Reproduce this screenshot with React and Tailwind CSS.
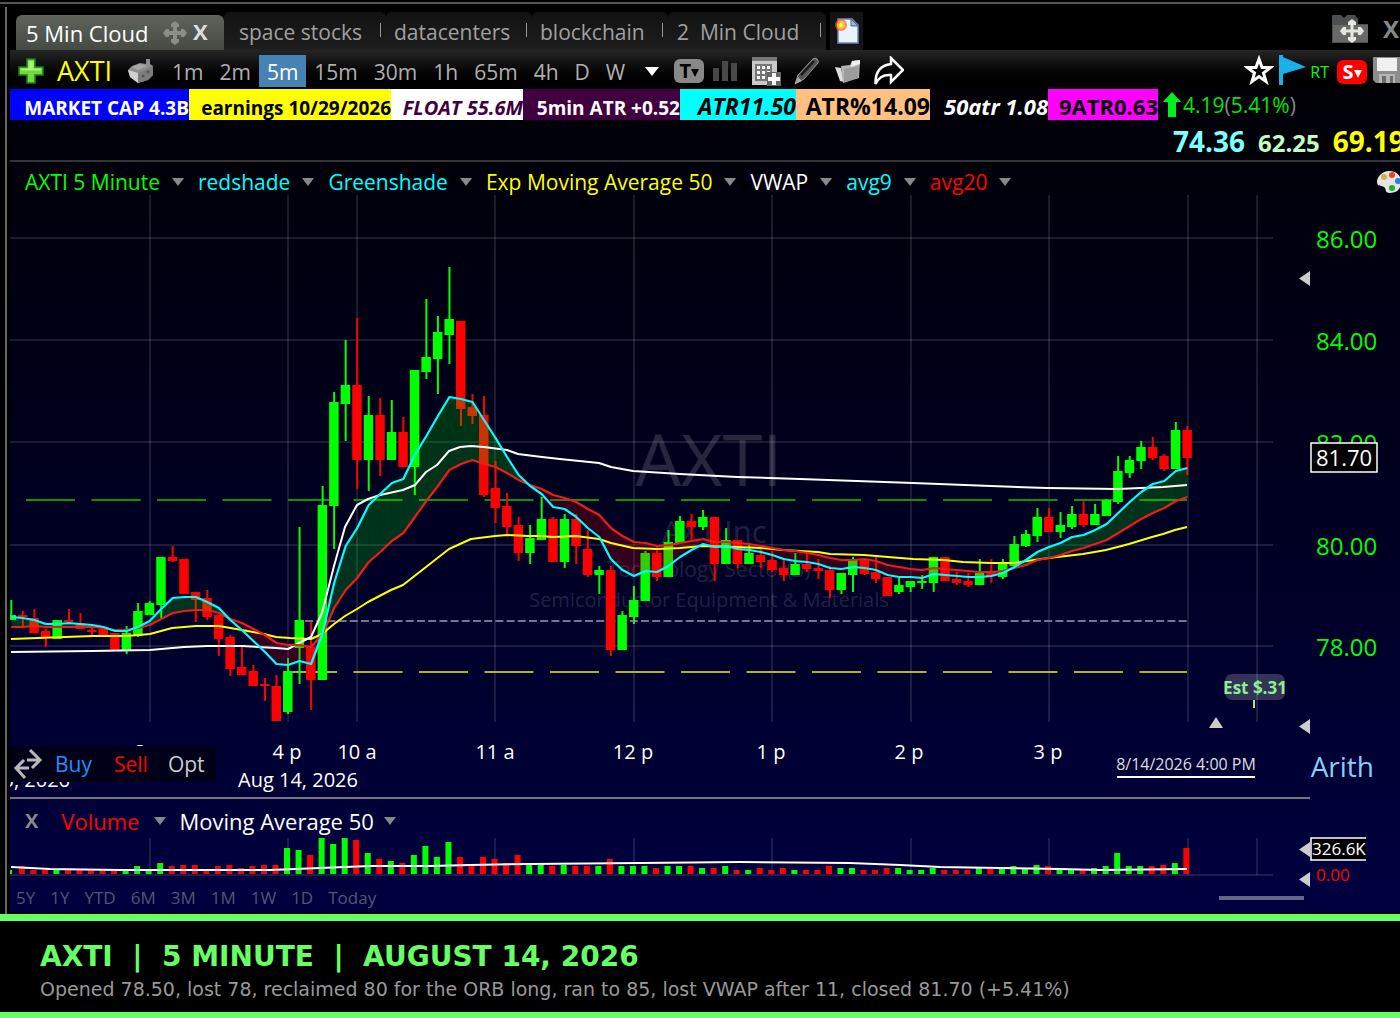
import { useState } from 'react';

// [color, high, bodyTop, bodyBottom, low, volume] for every 5 minute bar
const bars = [
  ['g', 600, 615, 620, 620, 4], ['r', 611, 615, 617, 626, 8], ['r', 609, 618, 633, 633, 4], ['r', 629, 631, 637, 647, 4],
  ['g', 620, 620, 639, 639, 4], ['r', 609, 620, 622, 624, 5], ['r', 613, 623, 629, 629, 4], ['r', 628, 630, 632, 636, 4],
  ['r', 629, 629, 636, 636, 4], ['r', 633, 633, 650, 650, 4], ['g', 626, 633, 651, 654, 4], ['g', 603, 611, 636, 637, 8],
  ['g', 601, 603, 615, 615, 4], ['g', 557, 557, 605, 618, 11], ['r', 546, 557, 561, 562, 8], ['r', 559, 559, 594, 594, 9],
  ['r', 592, 592, 600, 622, 9], ['r', 590, 598, 617, 620, 4], ['r', 615, 615, 639, 656, 8], ['r', 635, 637, 669, 676, 9],
  ['r', 646, 667, 675, 675, 6], ['r', 665, 671, 686, 686, 8], ['r', 678, 684, 686, 701, 9], ['r', 675, 686, 721, 721, 9],
  ['g', 658, 671, 712, 714, 26], ['g', 527, 620, 648, 684, 24], ['r', 622, 647, 680, 710, 19], ['g', 486, 505, 680, 680, 36],
  ['g', 392, 402, 506, 549, 30], ['g', 340, 385, 404, 441, 36], ['r', 318, 385, 460, 489, 34], ['g', 396, 415, 460, 491, 21],
  ['r', 398, 415, 460, 476, 15], ['g', 400, 432, 460, 460, 13], ['r', 417, 432, 467, 467, 11], ['g', 370, 370, 467, 495, 19],
  ['g', 299, 357, 372, 379, 28], ['g', 316, 332, 359, 394, 17], ['g', 267, 319, 335, 364, 32], ['r', 321, 321, 409, 426, 17],
  ['r', 394, 407, 416, 424, 8], ['r', 396, 415, 495, 497, 17], ['r', 461, 488, 508, 523, 15], ['r', 493, 506, 527, 534, 11],
  ['r', 517, 525, 553, 561, 19], ['g', 525, 538, 553, 564, 9], ['g', 497, 519, 540, 540, 10], ['r', 517, 519, 562, 562, 8],
  ['g', 514, 519, 562, 568, 9], ['r', 514, 519, 546, 564, 8], ['r', 530, 549, 575, 577, 8], ['g', 566, 570, 575, 594, 8],
  ['r', 566, 570, 650, 656, 15], ['g', 611, 615, 650, 650, 8], ['g', 586, 600, 617, 624, 8], ['g', 551, 553, 601, 601, 8],
  ['r', 547, 553, 577, 581, 6], ['g', 530, 542, 577, 577, 8], ['g', 516, 521, 543, 543, 8], ['r', 514, 521, 527, 542, 8],
  ['g', 510, 517, 527, 530, 6], ['r', 517, 517, 564, 581, 6], ['g', 528, 540, 564, 564, 8], ['r', 540, 540, 564, 568, 4],
  ['g', 545, 553, 564, 564, 4], ['r', 545, 555, 562, 568, 6], ['r', 551, 560, 570, 572, 4], ['r', 560, 568, 575, 581, 6],
  ['g', 553, 564, 575, 575, 4], ['r', 553, 564, 569, 572, 4], ['r', 559, 568, 571, 579, 4], ['r', 566, 570, 590, 598, 8],
  ['g', 573, 573, 590, 594, 6], ['g', 557, 560, 575, 592, 6], ['r', 559, 559, 574, 575, 4], ['r', 556, 572, 579, 583, 4],
  ['r', 577, 577, 596, 596, 6], ['g', 578, 585, 592, 594, 6], ['g', 581, 581, 587, 592, 4], ['g', 575, 581, 583, 589, 4],
  ['g', 557, 557, 583, 592, 6], ['r', 557, 557, 581, 581, 4], ['r', 572, 579, 583, 585, 4], ['r', 573, 581, 585, 587, 4],
  ['g', 559, 573, 585, 585, 6], ['r', 559, 571, 576, 583, 6], ['g', 559, 564, 577, 579, 6], ['g', 536, 544, 566, 566, 8],
  ['g', 530, 534, 546, 547, 5], ['g', 508, 517, 536, 542, 9], ['r', 508, 517, 532, 532, 8], ['g', 512, 525, 532, 538, 5],
  ['g', 506, 514, 527, 529, 4], ['r', 501, 514, 525, 527, 4], ['g', 504, 514, 525, 525, 6], ['g', 499, 500, 516, 516, 8],
  ['g', 456, 471, 502, 504, 21], ['g', 456, 460, 473, 478, 8], ['g', 441, 447, 461, 469, 8], ['r', 437, 447, 458, 460, 8],
  ['r', 454, 456, 469, 471, 9], ['g', 422, 430, 469, 469, 11], ['r', 426, 430, 458, 475, 26],
];

const avg9 = [
  617, 618, 620, 624, 624, 623, 624, 625, 627, 631, 631, 627, 621, 609, 598, 597, 597, 602, 608, 620, 630, 641, 652, 664,
  665, 661, 664, 633, 583, 546, 528, 505, 494, 483, 479, 455, 436, 416, 397, 399, 402, 420, 438, 457, 475, 486, 494, 507,
  509, 517, 528, 537, 559, 570, 576, 571, 572, 566, 557, 550, 544, 547, 546, 549, 550, 552, 555, 559, 561, 562, 564, 568,
  569, 567, 568, 570, 575, 577, 577, 578, 574, 575, 576, 577, 577, 576, 573, 567, 560, 552, 547, 543, 537, 535, 530, 524,
  513, 502, 492, 484, 481, 471, 468,
];

const avg20 = [
  627, 627, 626, 627, 627, 627, 627, 627, 628, 630, 630, 628, 625, 619, 613, 611, 610, 610, 613, 619, 623, 629, 635, 643,
  645, 645, 647, 634, 608, 590, 578, 562, 552, 541, 533, 517, 501, 486, 470, 464, 460, 464, 467, 473, 480, 485, 489, 495,
  498, 502, 509, 515, 528, 536, 542, 543, 546, 545, 543, 541, 539, 542, 542, 543, 544, 546, 548, 550, 551, 553, 555, 558,
  560, 560, 559, 561, 565, 567, 569, 570, 568, 569, 570, 571, 572, 572, 571, 568, 565, 560, 558, 555, 551, 548, 544, 540,
  533, 526, 519, 513, 508, 501, 497,
];

const ema50 =
  '11,639 92,636 127,636 150,634 172,628 196,626 219,626 242,630 264,634 276,637 290,638 311,639 322,634 334,624 345,616 357,609 368,602 391,590 403,585 426,567 449,549 471,539 495,536 507,535 528,536 541,536 553,537 576,536 599,539 611,543 633,548 657,549 680,548 702,546 737,547 761,548 783,550 818,552 830,554 864,555 888,557 913,559 944,560 963,562 991,563 1014,563 1027,561 1049,558 1083,554 1106,550 1129,544 1152,537 1163,534 1175,530 1187,527';
const vwap =
  '11,652 92,651 150,650 184,647 207,646 242,646 276,648 288,649 299,643 311,637 322,613 334,566 345,527 357,505 368,499 380,495 403,490 415,485 426,472 437,465 449,451 460,447 471,446 484,447 507,450 518,454 542,457 560,459 599,463 611,467 633,471 680,474 737,477 800,479 913,483 991,486 1047,488 1118,489 1163,487 1187,485';
const volumeAvg =
  '11,867 50,869 120,870 270,870 320,868 370,866 430,866 470,865 530,864 640,863 740,862 850,863 900,865 940,867 1000,868 1060,869 1100,870 1187,869';

const columns = [150, 288, 357, 495, 634, 772, 911, 1049, 1188, 1257];
const priceRows = [
  { y: 238, label: '86.00' },
  { y: 340, label: '84.00' },
  { y: 442, label: '82.00' },
  { y: 545, label: '80.00' },
  { y: 646, label: '78.00' },
];
const times = [
  { x: 149, label: '3 p' },
  { x: 287, label: '4 p' },
  { x: 357, label: '10 a' },
  { x: 495, label: '11 a' },
  { x: 633, label: '12 p' },
  { x: 771, label: '1 p' },
  { x: 909, label: '2 p' },
  { x: 1048, label: '3 p' },
];

const studies = [
  { name: 'AXTI 5 Minute', color: 'text-[#00ff00]' },
  { name: 'redshade', color: 'text-[#00ffff]' },
  { name: 'Greenshade', color: 'text-[#00ffff]' },
  { name: 'Exp Moving Average 50', color: 'text-[#ffff00]' },
  { name: 'VWAP', color: 'text-white' },
  { name: 'avg9', color: 'text-[#00ffff]' },
  { name: 'avg20', color: 'text-[#ff0000]' },
];

const badges = [
  { text: 'MARKET CAP 4.3B', style: 'w-[179px] bg-[#0000ff] text-white text-[19px] leading-6' },
  { text: 'earnings 10/29/2026', style: 'w-[202px] bg-[#ffff00] text-black text-[19px] leading-6' },
  { text: 'FLOAT 55.6M', style: 'w-[132px] bg-white text-[#400040] text-[20px] leading-6 italic' },
  { text: '5min ATR +0.52', style: 'w-[157px] bg-[#400040] text-white text-[19px] leading-6' },
  { text: 'ATR11.50', style: 'w-[116px] bg-[#00ffff] text-black text-[23px] leading-7 italic' },
  { text: 'ATR%14.09', style: 'w-[134px] bg-[#ffc080] text-black text-[23px] leading-7' },
  { text: '50atr 1.08', style: 'w-[118px] text-white text-[22px] leading-7 italic' },
  { text: '9ATR0.63', style: 'w-[110px] bg-[#ff00ff] text-black text-[22px] leading-7' },
];

const tabs = [
  { name: 'space stocks', width: 'w-[162px] pl-[15px]' },
  { name: 'datacenters', width: 'w-[146px] pl-2' },
  { name: 'blockchain', width: 'w-[136px] pl-2' },
  { name: '2  Min Cloud', width: 'w-[158px] pl-[9px]' },
];
const intervals = ['1m', '2m', '5m', '15m', '30m', '1h', '65m', '4h', 'D', 'W'];
const ranges = ['5Y', '1Y', 'YTD', '6M', '3M', '1M', '1W', '1D', 'Today'];

const barX = (i) => 11.3 + i * 11.53;
const fill = { g: '#00ff00', r: '#ff0000' };
const toPoints = (values) => values.map((y, i) => `${barX(i)},${y}`).join(' ');

// shaded area between the two averages, split where they cross
const cloud = avg9.slice(1).flatMap((b1, n) => {
  const a1 = avg9[n];
  const a2 = avg20[n];
  const b2 = avg20[n + 1];
  const x1 = barX(n);
  const x2 = barX(n + 1);
  const d1 = a2 - a1;
  const d2 = b2 - b1;
  const shade = (d) => (d > 0 ? '#00ff00' : '#ff0000');
  if (d1 * d2 >= 0) {
    return [{ color: shade(d1 + d2), points: `${x1},${a1} ${x2},${b1} ${x2},${b2} ${x1},${a2}` }];
  }
  const t = d1 / (d1 - d2);
  const cross = `${x1 + t * (x2 - x1)},${a1 + t * (b1 - a1)}`;
  return [
    { color: shade(d1), points: `${x1},${a1} ${cross} ${x1},${a2}` },
    { color: shade(d2), points: `${x2},${b1} ${cross} ${x2},${b2}` },
  ];
});

const MoveIcon = ({ className }) => (
  <svg viewBox="0 0 24 24" className={className} fill="currentColor">
    <path d="M10 5v5H5v4h5v5h4v-5h5v-4h-5V5z" />
    <path d="M12 0l4 3v3H8V3zM12 24l-4-3v-3h8v3zM0 12l3-4h3v8H3zM24 12l-3 4h-3V8h3z" />
  </svg>
);

const Caret = ({ className = 'w-3 h-2 text-[#888]' }) => (
  <svg viewBox="0 0 12 8" className={className} fill="currentColor" preserveAspectRatio="none">
    <path d="M0 0h12L6 8z" />
  </svg>
);

const TabBar = () => (
  <div className="flex items-end h-[43px] pl-[6px]">
    <div className="flex items-center w-[208px] h-[35px] pl-[10px] shrink-0 rounded-t-md bg-gradient-to-b from-[#5f635c] to-[#454b43] text-white">
      <button className="text-[22px] leading-7 w-[122px] text-left whitespace-nowrap">5 Min Cloud</button>
      <MoveIcon className="w-6 h-6 ml-[15px] text-[#8a8d88]" />
      <button aria-label="Close tab" className="ml-[6px] -mt-1 text-[22px] leading-6 font-bold text-[#ddd]">X</button>
    </div>
    {tabs.map((tab) => (
      <div
        key={tab.name}
        className={`${tab.width} flex items-center justify-between h-[38px] pt-px pr-[5px] shrink-0 rounded-t-md bg-gradient-to-b from-[#121212] to-[#1e1e1e]`}
      >
        <button className="text-[21px] leading-7 whitespace-pre text-[#a0a0a0]">{tab.name}</button>
        <span className="w-px h-[14px] mb-1 bg-[#999]" />
      </div>
    ))}
    <button aria-label="New tab" className="flex items-center justify-center w-[33px] h-[38px] ml-1 shrink-0 bg-[#141414]">
      <svg viewBox="0 0 24 28" className="w-6 h-7">
        <path d="M3 2h14l6 6v18H3z" fill="#eaf3fc" stroke="#6f85a8" strokeWidth="1.500" />
        <path d="M16 2v7h7z" fill="#9db4d3" stroke="#4d6590" />
        <circle cx="6" cy="8" r="6" fill="#ff5a2a" opacity="0.700" />
        <circle cx="6" cy="8" r="4" fill="#ffc21a" />
        <circle cx="6" cy="8" r="2" fill="#fff27a" />
      </svg>
    </button>
    <div className="flex items-center ml-auto mr-px h-[42px] shrink-0">
      <button aria-label="Layouts">
        <svg viewBox="0 0 38 30" className="w-[38px] h-[30px]">
          <path d="M1 10V2q0-1 1-1h8l3 3 3-3h8l3 4v5h10v19H1z" fill="#4c4e50" />
          <path d="M2 11h35v17H2z" fill="#686a6a" />
          <path d="M21 9v16M13 17h16" stroke="#e6e6e0" strokeWidth="3" />
          <path d="M21 5l4 3v3h-8V8zM21 29l-4-3v-3h8v3zM9 17l3-4h3v8h-3zM33 17l-3-4h-3v8h3z" fill="#e6e6e0" />
        </svg>
      </button>
      <button aria-label="Close window" className="ml-[14px] text-2xl leading-6 font-bold text-[#888]">X</button>
    </div>
  </div>
);

const Toolbar = () => {
  const [interval, setChartInterval] = useState('5m');

  return (
    <div className="flex items-center justify-between h-[39px] pl-2 overflow-hidden bg-gradient-to-b from-[#262626] to-black">
      <div className="flex items-center shrink-0 pt-[3px]">
        <button aria-label="Add symbol">
          <svg viewBox="0 0 26 26" className="w-[26px] h-[26px]">
            <path d="M9 1h8v8h8v8h-8v8H9v-8H1V9h8z" fill="#70da3c" stroke="#14821a" strokeWidth="1.500" />
            <path d="M10.500 3h5v7.500H23v2H3v-2h7.500z" fill="#a9f07e" />
          </svg>
        </button>
        <button className="w-[58px] ml-[13px] text-left text-[27px] leading-8 text-[#ffff00]">AXTI</button>
        <button aria-label="Scan" className="ml-3">
          <svg viewBox="0 0 28 26" className="w-7 h-[26px]">
            <path d="M1 12l4-4 8-3 6 1V1h4v5l3 2v9l-5 5-10 3-8-6z" fill="#8e8e8e" />
            <path d="M1 12l10 3v10l-8-6z" fill="#cfcfcf" />
            <path d="M11 15l15-7v9l-5 5-10 3z" fill="#7c7c7c" />
            <path d="M5 9l8-3 7 2-9 4z" fill="#a8a8a8" />
            <circle cx="16" cy="18" r="1.500" fill="#555" />
            <circle cx="21" cy="14" r="1.500" fill="#555" />
          </svg>
        </button>
        <div className="flex ml-[9px]">
          {intervals.map((item) => (
            <button
              key={item}
              onClick={() => setChartInterval(item)}
              className={`h-8 px-2 text-[21px] leading-[34px] ${item === interval ? 'bg-[#4682b4] text-white' : 'text-[#b0b0b0]'}`}
            >
              {item}
            </button>
          ))}
        </div>
        <button aria-label="More intervals" className="ml-3">
          <Caret className="w-[14px] h-[9px] text-white" />
        </button>
        <button className="flex items-center justify-center w-[30px] h-6 ml-[15px] rounded-md bg-[#888] text-black text-xl leading-6 font-bold">
          T<Caret className="w-2 h-2 mt-1" />
        </button>
        <button aria-label="Bar style" className="ml-2">
          <svg viewBox="0 0 26 22" className="w-[26px] h-[22px]" fill="#484848">
            <path d="M1 8h6v13H1zM10 1h6v20h-6zM19 3h6v18h-6z" />
          </svg>
        </button>
        <button aria-label="Add study" className="ml-[13px]">
          <svg viewBox="0 0 30 30" className="w-[30px] h-[30px]">
            <path d="M1 1h25v28H1z" fill="#c9c9c9" />
            <path d="M1 1h25v4H1z" fill="#777" />
            <path d="M4 8h17v17H4z" fill="#777" />
            <path d="M6 10h3v3H6zM11 10h3v3h-3zM16 10h3v3h-3zM6 15h3v3H6zM11 15h3v3h-3zM16 15h3v3h-3zM6 20h3v3H6zM11 20h3v3h-3z" fill="#fff" />
            <path d="M16 16h14v14H16z" fill="#666" />
            <path d="M21 17h4v4h4v4h-4v4h-4v-4h-4v-4h4z" fill="#fff" />
          </svg>
        </button>
        <button aria-label="Draw" className="ml-[13px]">
          <svg viewBox="0 0 26 28" className="w-[26px] h-7">
            <path d="M1 27l3-9L19 2q2-2 4 0t1 4L10 22z" fill="#555" stroke="#999" strokeWidth="1" />
            <path d="M7 18L20 4" stroke="#181818" strokeWidth="2.500" />
            <path d="M1 27l3-7 4 4z" fill="#aaa" />
          </svg>
        </button>
        <button aria-label="Folders" className="ml-[14px]">
          <svg viewBox="0 0 28 26" className="w-7 h-[26px]">
            <path d="M1 9l6 1 3 14-4-1z" fill="#ddd" />
            <path d="M7 8l9-1 2-4 8-1-1 18-16 5z" fill="#b4b4b4" />
            <path d="M10 11l15-3-1 12-14 4z" fill="#9c9c9c" />
            <path d="M18 3l8-1v4l-9 3z" fill="#eee" />
          </svg>
        </button>
        <button aria-label="Share" className="ml-3">
          <svg viewBox="0 0 30 30" className="w-[30px] h-[30px]" fill="none" stroke="#fff" strokeWidth="2.500">
            <path d="M17 8V2l12 12-12 12v-7Q6 18 1.500 28 1 10 17 8z" />
          </svg>
        </button>
      </div>
      <div className="flex items-center shrink-0">
        <button aria-label="Favorite">
          <svg viewBox="0 0 30 30" className="w-[30px] h-[30px]" fill="none" stroke="#fff" strokeWidth="3">
            <path d="M15 4l3 8.500h8.500l-7 5.500 2.500 8.500-7-5-7 5 2.500-8.500-7-5.500H12z" />
          </svg>
        </button>
        <button aria-label="Flag" className="ml-[5px]">
          <svg viewBox="0 0 27 30" className="w-[27px] h-[30px]" fill="#1ab0ea">
            <path d="M0 0h4v2l23 10-23 7v11H0z" />
          </svg>
        </button>
        <span className="ml-1 mt-1 text-base text-[#00ff00]">RT</span>
        <button className="flex items-center justify-center w-[30px] h-6 mt-1 ml-2 rounded-md bg-[#ff0000] text-white text-xl leading-6 font-bold">
          S<Caret className="w-2 h-2 mt-1" />
        </button>
        <button aria-label="Save" className="ml-[6px]">
          <svg viewBox="0 0 27 28" className="w-[27px] h-7">
            <path d="M0 1h27v26H3l-3-3z" fill="#8c8c8c" />
            <path d="M4 2h20v13H4z" fill="#f0f0f0" />
            <path d="M6 18h16v9H6z" fill="#b5b5b5" />
            <path d="M9 20h4v7H9zM17 20h3v7h-3z" fill="#6c6c6c" />
          </svg>
        </button>
      </div>
    </div>
  );
};

const PriceChart = () => (
  <svg viewBox="10 195 1390 602" className="block w-full" role="img" aria-label="AXTI 5 minute price chart">
    <g stroke="#ffffff" strokeOpacity="0.110" strokeWidth="2">
      {columns.map((x) => (
        <line key={x} x1={x} x2={x} y1="195" y2="722" />
      ))}
      {priceRows.map((row) => (
        <line key={row.y} x1="10" x2="1273" y1={row.y} y2={row.y} />
      ))}
    </g>
    <g fill="#ffffff" fillOpacity="0.150" textAnchor="middle">
      <text x="709" y="486" fontSize="72">AXTI</text>
      <text x="714" y="543" fontSize="31">AXT Inc</text>
      <text x="709" y="577" fontSize="21">Technology Sector(3)</text>
      <text x="709" y="607" fontSize="20">Semiconductor Equipment &amp; Materials</text>
    </g>
    <g strokeWidth="2">
      <line x1="26" x2="1187" y1="500" y2="500" stroke="#009a10" strokeDasharray="49 16.500" />
      <line x1="288" x2="1187" y1="672" y2="672" stroke="#b4b414" strokeDasharray="49 16.500" />
      <line x1="305" x2="1187" y1="621" y2="621" stroke="#747490" strokeDasharray="8 3.200" />
    </g>
    {bars.map(([color, high, top, bottom, low], i) => (
      <g key={i} fill={fill[color]}>
        <rect x={barX(i) - 1} y={high} width="2" height={low - high} />
        <rect x={Math.max(10, barX(i) - 5)} y={top} width={i ? 9.5 : 6} height={bottom - top} />
      </g>
    ))}
    {cloud.map((part, i) => (
      <polygon key={i} points={part.points} fill={part.color} fillOpacity="0.200" />
    ))}
    <g fill="none" strokeWidth="2" strokeLinejoin="round">
      <polyline points={ema50} stroke="#ffff00" />
      <polyline points={vwap} stroke="#ffffff" />
      <polyline points={toPoints(avg20)} stroke="#ee1c1c" strokeWidth="2.200" />
      <polyline points={toPoints(avg9)} stroke="#00ffff" strokeWidth="2.200" />
    </g>

    <g fill="#00ff00" fontSize="24">
      {priceRows.map((row) => (
        <text key={row.y} x="1316" y={row.y + 10}>{row.label}</text>
      ))}
    </g>
    <rect x="1311" y="443" width="66" height="29" fill="#000" stroke="#fff" strokeWidth="1.500" />
    <text x="1316" y="466" fontSize="22" fill="#fff">81.70</text>
    <path d="M1310 271v15l-11-7.500zM1310 719v15l-11-7.500zM1209 728h14l-7-11z" fill="#ccc" />

    <rect x="1225" y="674" width="60" height="26" rx="7" fill="#fff" fillOpacity="0.200" />
    <text x="1255" y="694" fontSize="17" fontWeight="700" fill="#90ee90" textAnchor="middle">Est $.31</text>
    <rect x="1253" y="700" width="2" height="8" fill="#90ee90" />

    <g fill="#fff" fontSize="20" textAnchor="middle">
      {times.map((time) => (
        <text key={time.x} x={time.x} y="759">{time.label}</text>
      ))}
      <text x="298" y="787">Aug 14, 2026</text>
      <text x="70" y="787" textAnchor="end">Aug 13, 2026</text>
    </g>
    <text x="1186" y="770" fontSize="16" fill="#ddd" textAnchor="middle">8/14/2026 4:00 PM</text>
    <rect x="1117" y="776" width="138" height="2" fill="#fff" />
  </svg>
);

const VolumeChart = () => (
  <svg viewBox="10 836 1390 52" className="block w-full" role="img" aria-label="Volume chart">
    <g stroke="#ffffff" strokeOpacity="0.110" strokeWidth="2">
      {columns.map((x) => (
        <line key={x} x1={x} x2={x} y1="838" y2="875" />
      ))}
      <line x1="10" x2="1273" y1="875" y2="875" />
    </g>
    {bars.map(([color, , , , , volume], i) => (
      <rect key={i} x={Math.max(10, barX(i) - 4)} y={874 - volume} width={i ? 6 : 2} height={volume} fill={fill[color]} />
    ))}
    <polyline points={volumeAvg} fill="none" stroke="#fff" strokeWidth="2" />
    <path d="M1310 842v15l-11-7.500zM1310 872v15l-11-7.500z" fill="#ccc" />
    <path d="M1366 838h-55v22h55" fill="#000" stroke="#fff" strokeWidth="1.500" />
    <text x="1312" y="855" fontSize="17" fill="#fff">326.6K</text>
    <text x="1316" y="881" fontSize="17" fill="#ff0000">0.00</text>
  </svg>
);

export default function App() {
  return (
    <div className="min-h-screen overflow-x-hidden bg-black pt-[2px] font-['Open_Sans','Noto_Sans',sans-serif]">
      <div className="h-[2px] mb-[3px] bg-[#555]" />
      <main className="ml-[5px] pl-[3px] pb-[2px] border-l-2 border-[#666]">
        <TabBar />
        <Toolbar />
        <div className="bg-gradient-to-b from-[#000006] to-[#000040]">
          <div className="flex h-[31px] font-bold">
            {badges.map((badge) => (
              <div key={badge.text} className={`${badge.style} flex items-end justify-end shrink-0 whitespace-nowrap`}>
                {badge.text}
              </div>
            ))}
            <div className="flex items-center shrink-0 pl-[5px] text-[21px] font-normal text-[#00e800]">
              <svg viewBox="0 0 18 26" className="w-[18px] h-[26px]" fill="#00f020">
                <path d="M9 0l9 10h-5v15H5V10H0z" />
              </svg>
              <span className="ml-[2px] pt-[2px]">
                4.19<span className="text-[#888]">(</span>5.41%<span className="text-[#888]">)</span>
              </span>
            </div>
          </div>
          <div className="flex items-baseline h-[42px] pl-[1163px] gap-[13px] border-b-2 border-[#333338] overflow-hidden font-bold leading-[42px] whitespace-nowrap">
            <span className="text-[28px] text-[#80ffff]">74.36</span>
            <span className="text-2xl leading-10 text-[#c0ffc0]">62.25</span>
            <span className="text-[28px] text-[#ffff00]">69.19</span>
          </div>

          <div className="flex items-center h-[33px] pt-[6px] pl-[15px] gap-[14px]">
            {studies.map((study) => (
              <button key={study.name} className={`flex items-center gap-3 shrink-0 text-[21px] leading-7 whitespace-nowrap ${study.color}`}>
                {study.name}
                <Caret />
              </button>
            ))}
            <button aria-label="Chart colors" className="ml-auto -mr-px shrink-0">
              <svg viewBox="0 0 24 24" className="w-6 h-6">
                <path d="M12 1c7 0 12 4 12 11s-4 11-11 11c-6 0-3-4-6-6s-7 0-7-5S5 1 12 1z" fill="#e4e4e4" />
                <circle cx="7" cy="7" r="3" fill="#d8b040" />
                <circle cx="15" cy="5" r="3" fill="#f04020" />
                <circle cx="21" cy="11" r="3" fill="#2080f0" />
                <circle cx="15" cy="18" r="3" fill="#20b020" />
              </svg>
            </button>
          </div>

          <div className="relative">
            <PriceChart />
            <div className="absolute left-0 bottom-[15px] flex items-center w-[206px] h-9 pl-[3px] text-[21px] leading-7 bg-[#000018]">
              <button aria-label="Swap">
                <svg viewBox="0 0 30 30" className="w-[30px] h-[30px]" fill="none" stroke="#b8b8b8" strokeWidth="3">
                  <path d="M14 11h13M17 1l10 10-8 8M16 19H3M11 11l-8 8 9 10" />
                </svg>
              </button>
              <button className="ml-3 text-[#1e90ff]">Buy</button>
              <button className="ml-[22px] text-[#ff0000]">Sell</button>
              <button className="ml-5 text-[#ccc]">Opt</button>
            </div>
            <button className="absolute right-[26px] bottom-[13px] text-[28px] leading-9 text-[#87cefa]">Arith</button>
          </div>

          <div className="mr-[90px] h-[2px] bg-[#777]" />
          <div className="flex items-center h-[37px] pt-[6px] pl-[15px] text-[22px] leading-7">
            <button aria-label="Remove volume" className="font-bold text-xl text-[#888]">X</button>
            <button className="flex items-center gap-[15px] ml-[23px] text-[#ff0000]">
              Volume
              <Caret />
            </button>
            <button className="flex items-center gap-[10px] ml-[13px] text-white">
              Moving Average 50
              <Caret />
            </button>
          </div>
          <VolumeChart />
          <div className="flex items-center justify-between h-6 pl-[6px] pr-24 pb-1">
            <div className="flex gap-[15px] text-[17px] leading-5 text-[#55556f]">
              {ranges.map((range) => (
                <button key={range}>{range}</button>
              ))}
            </div>
            <div className="w-[85px] h-1 bg-[#66668a]" />
          </div>
        </div>
      </main>

      <footer className="pt-5 pb-[10px] px-10 border-t-[7px] border-b-[6px] border-[#66ff66] bg-black font-['DejaVu_Sans',sans-serif]">
        <h1 className="text-[28px] leading-8 font-bold whitespace-pre text-[#66ff66]">AXTI  |  5 MINUTE  |  AUGUST 14, 2026</h1>
        <p className="mt-[3px] text-[19px] leading-[26px] text-[#999]">
          Opened 78.50, lost 78, reclaimed 80 for the ORB long, ran to 85, lost VWAP after 11, closed 81.70 (+5.41%)
        </p>
      </footer>
    </div>
  );
}
